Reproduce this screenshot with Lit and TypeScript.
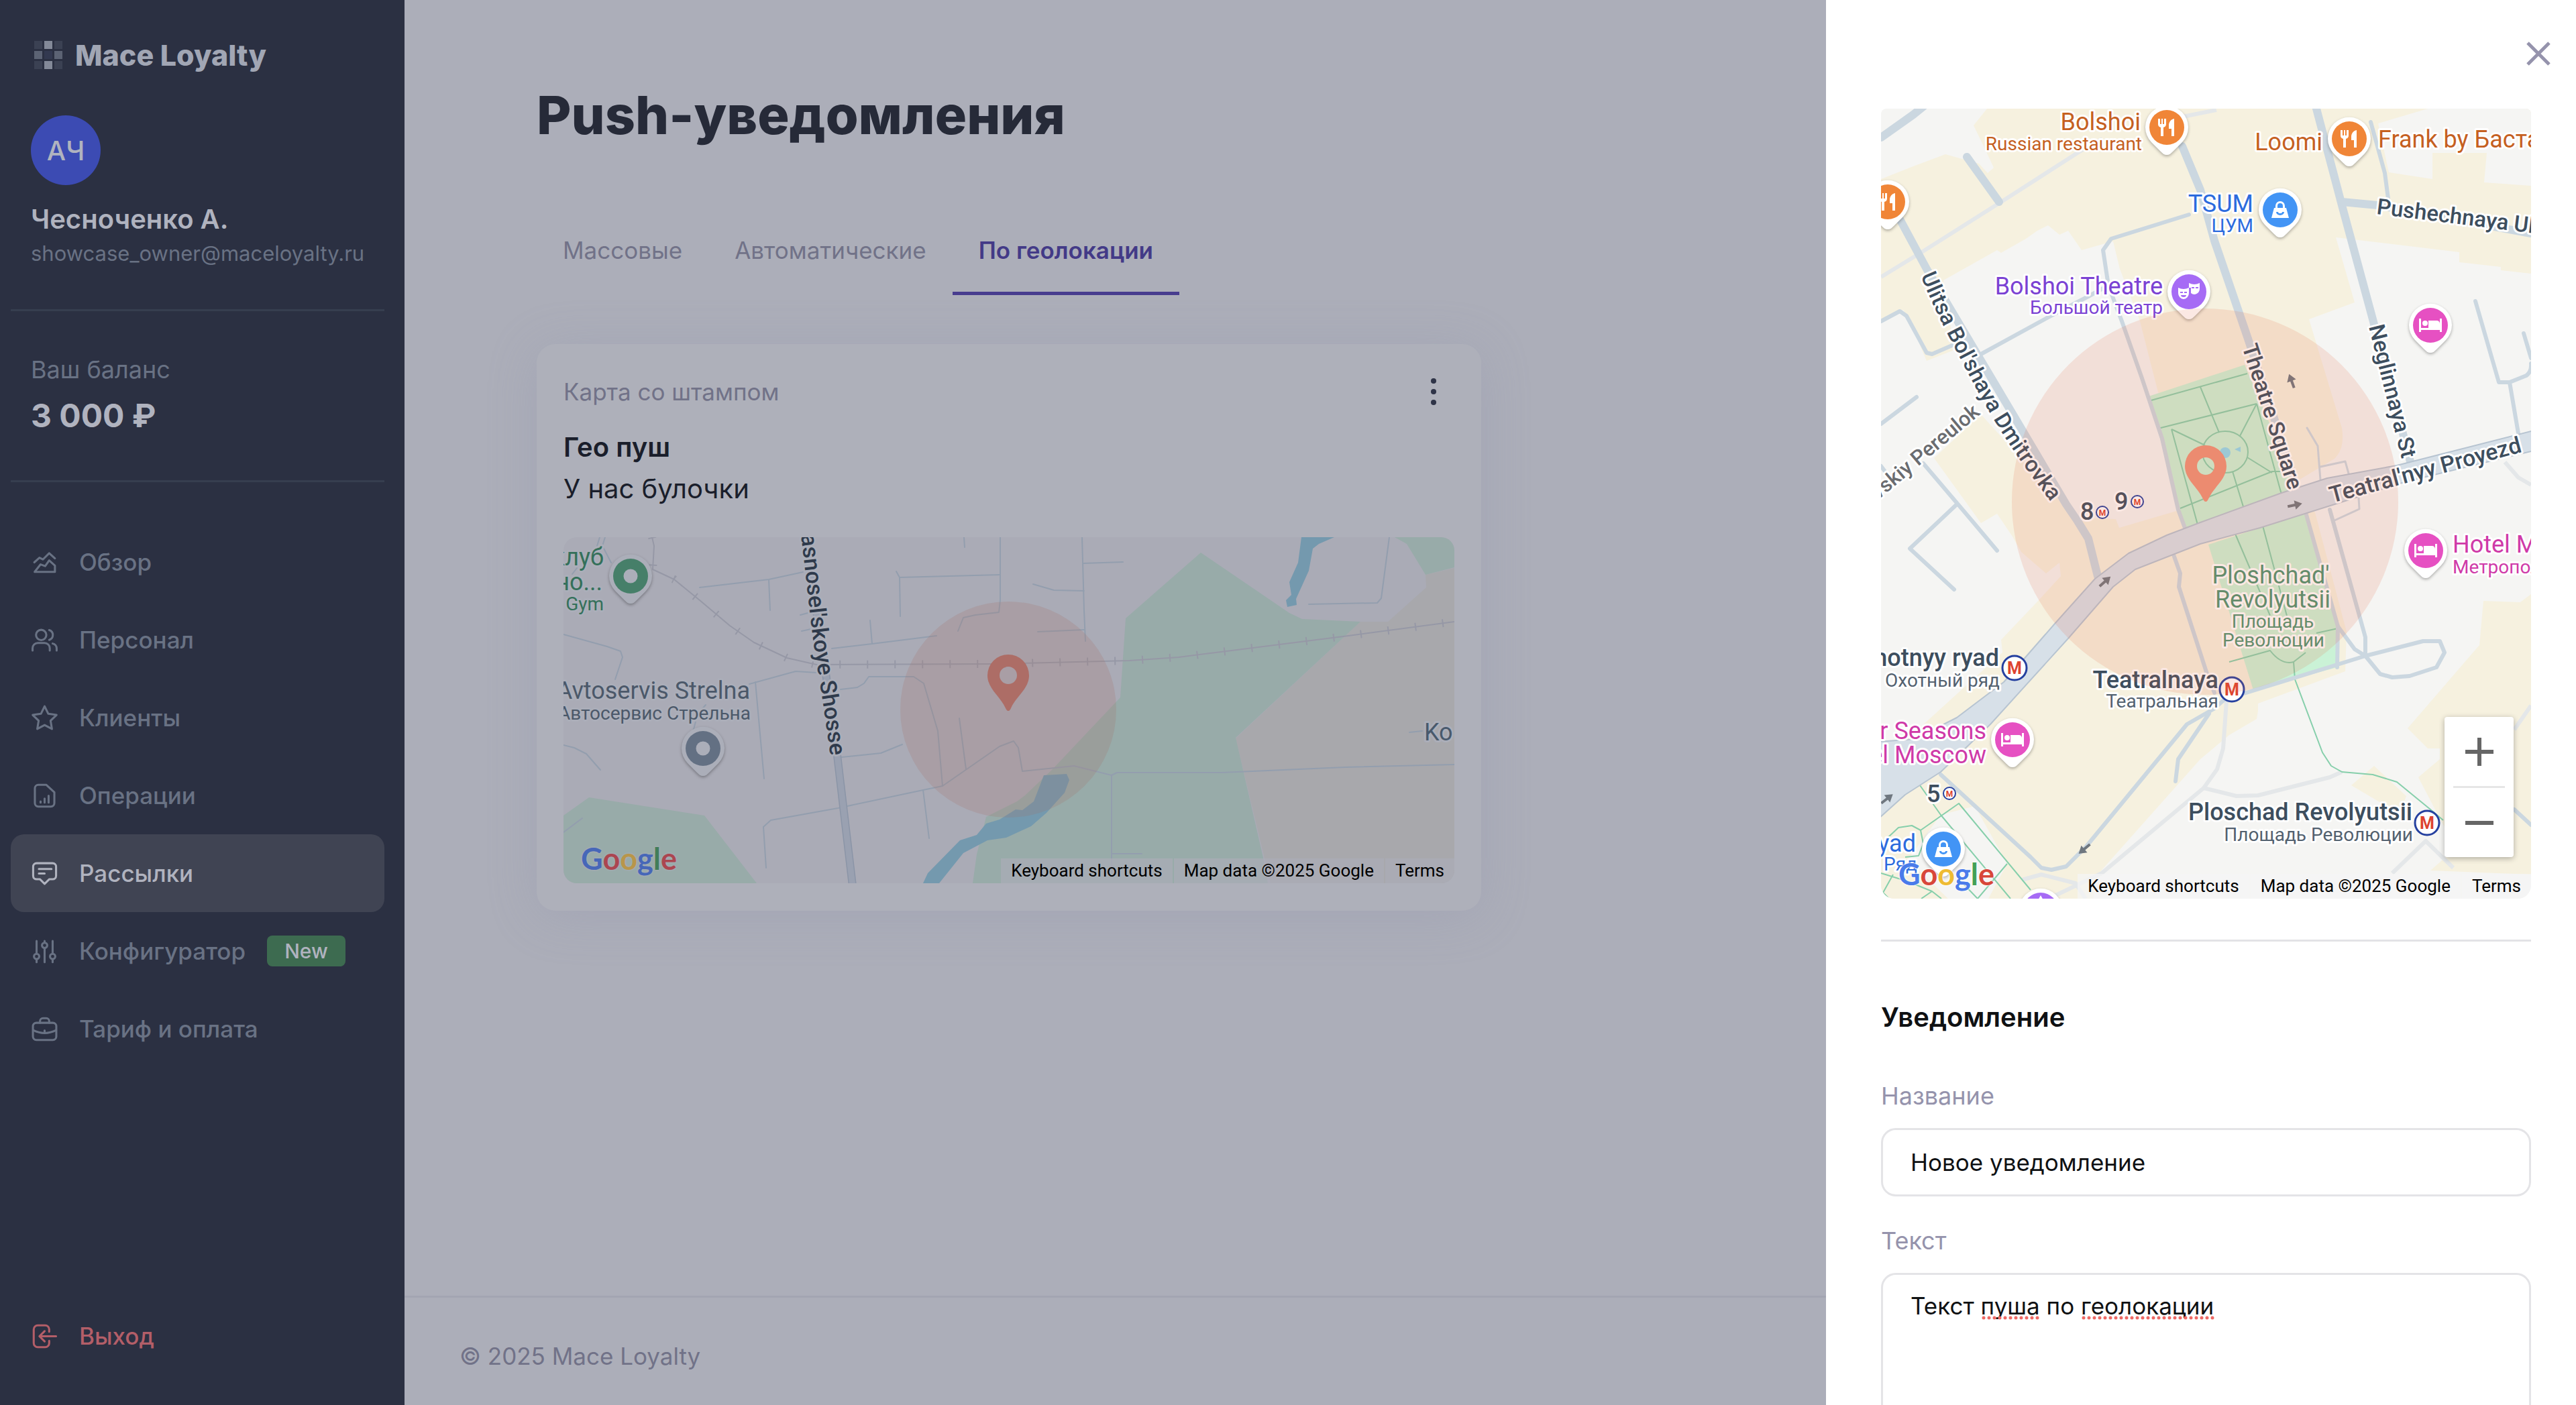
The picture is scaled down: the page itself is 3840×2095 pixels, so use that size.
import { LitElement, html, svg, css } from "lit";
import { customElement, property } from "lit/decorators.js";
import { classMap } from "lit/directives/class-map.js";

const shared = css`
  * { box-sizing: border-box; }
  button, input, textarea { font: inherit; margin: 0; }
  button { border: 0; background: none; padding: 0; cursor: pointer; color: inherit; }
  a { color: inherit; text-decoration: none; }
`;

/* ---------- Map drawing helpers ---------- */

const brandLetters = [
  ["G", "blue"], ["o", "red"], ["o", "yellow"], ["g", "blue"], ["l", "green"], ["e", "red"],
];

const glyphs: Record<string, unknown> = {
  food: svg`<path d="M-13 -13v8a5 5 0 0 0 4 5v13h4v-13a5 5 0 0 0 4 -5v-8h-3v8h-2v-8h-2v8h-2v-8zM11 -13c-5 1 -8 5 -8 10v5h4v11h4z"/>`,
  bag: svg`<path fill-rule="evenodd" d="M-9 -3h2v-3a7 7 0 0 1 14 0v3h2l4 15h-26zM-4 -3h8v-3a4 4 0 0 0 -8 0zM-6 3a6 5 0 0 0 12 0h-3a3 2 0 0 1 -6 0z"/>`,
  bed: svg`<path d="M-17 -10h3v14h11v-11h13a5 5 0 0 1 4 5v-8h3v20h-3v-3h-28v3h-3z"/><circle cx="-8" cy="-3" r="4"/>`,
  masks: svg`<path fill-rule="evenodd" d="M-16 -6q8 4 16 0v8a8 9 0 0 1 -16 0zM-13 0v2h4v-2zM-7 0v2h4v-2zM-12 5a4 3 0 0 0 8 0z"/><path fill-rule="evenodd" d="M0 -13q8 4 16 0v8a8 9 0 0 1 -13 7v-8h-3zM4 -7v2h4v-2zM10 -7v2h4v-2z"/>`,
  star: svg`<path d="M0 -22l5 9h9l-8 7 3 10 -9 -6 -9 6 3 -10 -8 -7h9z"/>`,
  dot: svg`<circle r="10.500"/>`,
};

const poi = (x: number, y: number, tone: string, glyph: string) => svg`
  <g class="poi" transform="translate(${x} ${y})">
    <path class="poi-shell" d="M0 41C-4 41 -6 39 -9 36L-23 22A32 32 0 1 1 23 22L9 36C6 39 4 41 0 41Z"/>
    <circle class="fill-${tone}" r="26"/>
    <g class="poi-glyph">${glyphs[glyph]}</g>
  </g>`;

const metro = (x: number, y: number, small = false) => svg`
  <g class="metro ${small ? "metro-small" : ""}" transform="translate(${x} ${y})">
    <circle r="${small ? 9 : 18}"/>
    <text text-anchor="middle" y="${small ? 5 : 9}">М</text>
  </g>`;

const pin = (x: number, y: number) => svg`
  <path class="pin" fill-rule="evenodd" transform="translate(${x} ${y})"
    d="M0 53C-2 53 -3 51 -4 49C-12 31 -31 20 -31 0A31 31 0 1 1 31 0C31 20 12 31 4 49C3 51 2 53 0 53ZM0 -13A13 13 0 1 0 0 13A13 13 0 1 0 0 -13Z"/>`;

const arrow = (x: number, y: number, angle: number) => svg`
  <path class="arrow" transform="translate(${x} ${y}) rotate(${angle})" d="M-11 -2h11v-5l11 7 -11 7v-5h-11z"/>`;

const paths = (cls: string, list: string[]) => list.map((d) => svg`<path class="${cls}" d="${d}"/>`);

type Label = [string, number, number, string, number?];
const labels = (list: Label[]) =>
  list.map(([text, x, y, cls, angle]) => svg`
    <text class="label ${cls}" transform="translate(${x} ${y}) rotate(${angle ?? 0})">${text}</text>`);

const suburb = svg`
  <svg class="canvas" viewBox="0 0 1328 516" preserveAspectRatio="xMidYMid slice" role="img" aria-label="Strelna">
    <path class="built" d="M1328 46L1285 56L1286 75L1229 126H1188L1002 300L1054 516H1328Z"/>
    ${paths("park", [
      "M950 23L1082 113L1101 122L1188 126L1002 299L1043 478L1050 516H610L616 473L630 417L676 394L688 385L729 346L830 239L838 121Z",
      "M1239 0L1257 10L1285 56L1328 45V0Z",
      "M0 415L38 388L210 415L288 516H0Z",
    ])}
    ${paths("water", [
      "M536 516L543 501L591 452L616 444L630 427L650 421L674 406L684 407L701 394L716 355L750 353L754 362L747 381L720 411L697 431L660 448L632 452L596 471L560 516Z",
      "M1100 0L1095 38L1082 67L1085 86L1077 94L1079 104L1093 101L1092 92L1111 50L1117 17L1126 10L1149 0Z",
    ])}
    ${paths("road thin", [
      "M203 75L306 63L357 52M306 63L308 109",
      "M0 145L65 163L85 170L88 179L77 212",
      "M0 310L16 314L34 323L55 347",
      "M277 219L346 200L377 202M286 216L299 360",
      "M496 51L501 60L650 56M501 60L502 118",
      "M651 0V94L649 112L614 116L596 120L588 140M597 0L598 15",
      "M400 166L460 159L556 147M457 124L460 159",
      "M413 227L438 224L448 218L455 208H522L537 218L558 289L565 371",
      "M415 328L473 322L505 309M590 270L600 346",
      "M302 493L298 432L309 422L409 404L536 377L565 371L650 312L671 304L678 314L684 349L761 341L817 355L825 351H981L1165 343L1328 339",
      "M536 377L545 449M817 355V500M817 472H862",
      "M773 0L776 109L778 155M775 39L834 37M700 70L731 79L776 80M707 141L776 138",
      "M1111 100L1213 98L1219 91L1231 0M1261 291L1280 289",
      "M54 0L50 13M62 0L58 13L71 38M13 55L20 46",
      "M353 116L368 112M355 140L369 137M0 440L28 419M205 258L212 250M193 290L197 275",
    ])}
    ${["rail", "rail ties"].map((cls) => svg`<path class="${cls}" d="M132 0L135 13L133 48L165 63L203 94L248 132L284 157L333 180L377 190L641 189L844 184L917 179L1004 168L1170 147L1328 126"/>`)}
    <path class="avenue-edge" d="M358 -4L385 160L408 325L431 520"/>
    <path class="avenue" d="M358 -4L385 160L408 325L431 520"/>
    <path id="shosse" class="guide" d="M354 -3C362 60 368 130 377 186C384 230 391 270 400 345"/>
    <text class="label street major"><textPath href="#shosse">asnosel'skoye Shosse</textPath></text>
    ${labels([
      ["клуб", 60, 42, "end green"], ["но...", 58, 79, "end green"], ["Gym", 60, 109, "end green small"],
      ["Avtoservis Strelna", 278, 241, "end slate"], ["Автосервис Стрельна", 279, 272, "end slate small"],
      ["Ko", 1283, 303, "navy"],
    ])}
    ${poi(100, 58, "green", "dot")}
    ${poi(208, 315, "slate", "dot")}
    <circle class="radius" cx="663" cy="257" r="161"/>
    ${pin(663, 206)}
  </svg>`;

const centre = svg`
  <svg class="canvas" viewBox="0 0 969 1178" preserveAspectRatio="xMidYMid slice" role="img" aria-label="Bolshoi Theatre">
    ${paths("built", [
      "M158 0L138 25L153 56L168 88L159 96L146 82L96 68L48 86L0 105V317L33 300L41 313L68 376L109 360L93 256L173 211L179 215L216 194L233 182L249 174L266 188L279 182L299 211L338 200L346 198L356 239L386 317L413 423L560 600L619 556L676 522Q692 506 687 476L638 314L706 289L678 192L862 214V229L924 236V241L969 246V0Z",
      "M149 456L290 610L350 612L355 625L440 600L633 590L647 602L694 780L692 839L562 887V898L560 910L519 934L476 970L323 1142L316 1178H0V960L59 922L181 811L179 792L236 732L268 697L266 677L246 693L209 661L196 638L173 604L149 618L79 521Z",
      "M898 734L953 736L969 724V1142L819 1136L860 1100L837 1066L801 997L833 970V954H815L785 924L892 800Z",
      "M735 980L783 1025L780 1033L769 1049L701 1009Z",
    ])}
    ${paths("ground", [
      "M815 0L741 22L757 95L822 105V66H903L899 110L969 115V0Z",
      "M89 1053L140 1040L188 1126L160 1178H100L40 1120Z",
    ])}
    ${paths("alley", [
      "M0 251L59 215L176 141L296 64L330 45M440 14L500 2",
      "M515 883L510 954L501 985L481 1013L329 1140L250 1178",
      "M481 1013L530 1025L562 1024L669 997L687 989M930 527L950 550L969 561",
      "M762 1140L812 1092L853 1132M969 890L944 926",
      "M210 1150L239 1142L290 1155L305 1178",
    ])}
    ${paths("park", ["M399 429L542 382L621 568L453 628Z", "M488 650L631 604L681 772L680 833L555 867Z"])}
    ${paths("path", [
      "M399 436L546 395M413 477L560 440M476 415L504 483M433 478L473 624M433 478L483 502M560 440L535 488M560 440L600 586",
      "M446 596L583 541H596M546 520L583 543M524 541L542 600",
      "M528 634L580 756M569 622L606 760M519 825L580 808Q597 830 615 825L633 811M649 782L681 775",
      "M615 825L617 851L658 960L671 980L687 989L733 993L769 1004L819 1045L838 1061",
      "M58 1009L89 1053L193 1178M223 1165L116 1036L59 1076M9 1088L26 1072L46 1069L59 1076L63 1096L56 1114L36 1116",
      "M0 1140L39 1152L76 1167L90 1178M76 1167L60 1178M18 1142L3 1169L12 1178M188 1126L144 1178L119 1152",
    ])}
    <ellipse class="path" cx="513" cy="512" rx="34" ry="31"/>
    <circle class="water" cx="513" cy="513" r="8"/>
    <path class="water" d="M527 508L536 504V512Z"/>
    ${paths("road street-line", [
      "M751 96L730 20M751 96L756 134",
      "M459 158L343 194L331 211L339 264L359 317L389 402L419 492L443 598L454 628",
      "M149 366L253 309L309 280L338 264",
      "M0 317L28 302L38 309L68 364L76 366L106 353",
      "M0 470L53 430M0 533L6 541M63 529L136 615L173 659M113 590L43 656L109 717",
      "M89 993L223 1116L239 1132L254 1135L276 1130L306 1100L456 918L496 895L512 881L722 816L808 794H833L840 811L828 833L788 846L762 848L744 843L722 816L706 806L681 772L633 602",
      "M681 772L680 833M669 598L722 788V816M436 665L446 693L444 713L486 843L497 871",
      "M489 902L443 970L439 1003M944 1045L969 1068",
      "M886 287L921 408H937L962 398Q970 392 969 380M958 335L969 372M937 408L951 490",
    ])}
    ${paths("road lane", ["M635 476L651 503L656 566M655 534L692 526L699 551M712 580L713 597L676 614"])}
    ${paths("road wide", [
      "M20 150L68 239L276 590L293 615L309 641L323 697",
      "M449 56L476 121L497 197L547 343L622 571",
      "M649 0L687 144L733 314L790 530",
      "M687 139L740 144L969 186",
      "M0 43L48 9L64 -4M128 72L176 139",
    ])}
    <path class="boulevard" d="M-4 944L50 940L113 908L183 855L259 768L319 701L369 663L426 636L476 617L597 573L665 551L769 532L973 480V510L783 556L676 590L565 625L476 649L379 687L346 713L279 790L163 918L89 989L36 1023L-4 1059Z"/>
    ${arrow(612, 406, -110)}
    ${arrow(617, 591, -12)}
    ${arrow(334, 705, -42)}
    ${arrow(9, 1029, -38)}
    ${arrow(303, 1104, 140)}
    <path id="dmitrovka" class="guide" d="M59 249C78 296 97 332 120 376C150 434 190 512 290 632"/>
    <text class="label street"><textPath href="#dmitrovka">Ulitsa Bol'shaya Dmitrovka</textPath></text>
    ${labels([
      ["vskiy Pereulok", 149, 455, "end lane-name", -40],
      ["Pushechnaya Ulitsa", 738, 157, "street", 7],
      ["Neglinnaya St", 727, 325, "street", 76],
      ["Theatre Square", 538, 355, "street", 72],
      ["Teatral'nyy Proyezd", 672, 588, "street major", -15],
      ["Bolshoi", 387, 32, "end orange"], ["Russian restaurant", 389, 62, "end orange small"],
      ["Loomi", 658, 62, "end orange"], ["Frank by Баста", 741, 58, "orange"],
      ["TSUM", 555, 154, "end blue"], ["ЦУМ", 555, 184, "end blue small"],
      ["Bolshoi Theatre", 420, 277, "end purple"], ["Большой театр", 420, 306, "end purple small"],
      ["8", 297, 613, "station"], ["9", 348, 598, "station"], ["5", 68, 1034, "station"],
      ["Ploshchad'", 581, 708, "middle park-name"], ["Revolyutsii", 584, 744, "middle park-name"],
      ["Площадь", 584, 774, "middle park-name small"], ["Революции", 585, 802, "middle park-name small"],
      ["Okhotnyy ryad", 176, 831, "end station"], ["Охотный ряд", 177, 862, "end slate small"],
      ["Teatralnaya", 503, 864, "end station"], ["Театральная", 503, 893, "end slate small"],
      ["Four Seasons", 157, 940, "end pink"], ["Hotel Moscow", 157, 976, "end pink"],
      ["Hotel Metropol", 852, 662, "pink"], ["Метрополь", 852, 693, "pink small"],
      ["Ploschad Revolyutsii", 792, 1061, "end station"], ["Площадь Революции", 793, 1092, "end slate small"],
      ["Okhotny Ryad", 52, 1108, "end blue"], ["Охотный Ряд", 54, 1136, "end blue small"],
    ])}
    ${metro(330, 602, true)} ${metro(382, 586, true)} ${metro(102, 1021, true)}
    ${metro(199, 834)} ${metro(523, 866)} ${metro(814, 1065)}
    ${poi(426, 28, "orange", "food")} ${poi(10, 139, "orange", "food")} ${poi(698, 45, "orange", "food")}
    ${poi(595, 151, "blue", "bag")} ${poi(93, 1104, "blue", "bag")}
    ${poi(459, 273, "purple", "masks")} ${poi(238, 1195, "purple", "star")}
    ${poi(819, 323, "pink", "bed")} ${poi(196, 941, "pink", "bed")} ${poi(812, 659, "pink", "bed")}
    <circle class="radius" cx="483" cy="586" r="288"/>
    ${pin(484, 533)}
  </svg>`;

@customElement("geo-map")
export class GeoMap extends LitElement {
  @property() place: "suburb" | "centre" = "suburb";
  @property({ type: Boolean, reflect: true }) dimmed = false;
  @property({ type: Boolean }) zoomable = false;

  static styles = [shared, css`
    :host {
      --ground: #f5f5f3; --built: #f6f1df; --park: #caf2d6; --water: #90daee; --path: #86cfab;
      --road: #cbd7e0; --edge: #b7c4d1; --boulevard: #d7e0e8; --alley: #e4e7e9; --halo: #fff;
      --orange: #f08537; --blue: #4294f5; --purple: #a66bf5; --pink: #e650c2; --green: #12b76a; --slate: #637083;
      --orange-ink: #c5601f; --blue-ink: #2c6bdd; --purple-ink: #7b42d3; --pink-ink: #cf3aa8; --green-ink: #34705a;
      --slate-ink: #53616f; --navy-ink: #48596c; --street-ink: #3d4e5e; --park-ink: #4f9372;
      --pin: #ec8b70; --radius: #e16240; --radius-alpha: 0.15; --attribution: #f5f5f5b3;
      display: block; position: relative; overflow: hidden; background: var(--ground);
      font-family: Roboto, "Liberation Sans", sans-serif;
    }
    :host([dimmed]) {
      --ground: #aaabb6; --built: #a8a8ac; --park: #98aba9; --water: #7499ae; --road: #939eae;
      --edge: #8b95a7; --boulevard: #9aa1b1; --halo: #abaeb9; --green: #467f69; --pin: #ad6d66;
      --slate-ink: #4b5869; --street-ink: #2f3a4b; --radius: #a66e63; --radius-alpha: 0.2; --attribution: #abadb8b3;
    }
    .canvas { display: block; width: 100%; height: 100%; }
    .canvas path, .canvas ellipse { fill: none; stroke-linejoin: round; }
    .canvas .ground { fill: var(--ground); }
    .canvas .built { fill: var(--built); }
    .canvas .park { fill: var(--park); }
    .canvas .water { fill: var(--water); }
    .road { stroke: var(--road); stroke-linecap: round; }
    .thin { stroke-width: 2; }
    .lane { stroke-width: 3; }
    .street-line { stroke-width: 6; }
    .wide { stroke-width: 12; }
    .alley { stroke: var(--alley); stroke-width: 6; }
    .path { stroke: var(--path); stroke-width: 2; }
    .rail { stroke: #9698a6; stroke-width: 2; }
    .ties { stroke-width: 12; stroke-dasharray: 2 39; }
    .avenue { stroke: var(--boulevard); stroke-width: 9; }
    .avenue-edge { stroke: var(--edge); stroke-width: 12; }
    .canvas .boulevard { fill: var(--boulevard); stroke: var(--edge); stroke-width: 2; }
    .canvas .arrow { fill: #6f777f; }
    .label {
      font-size: 36px; fill: var(--slate-ink); stroke: var(--halo); stroke-width: 6px;
      stroke-linejoin: round; paint-order: stroke;
    }
    .small { font-size: 28px; }
    .street { font-size: 33px; font-weight: 500; fill: var(--street-ink); }
    .major { font-size: 34px; }
    .lane-name { font-size: 31px; font-weight: 500; fill: #6a6c70; }
    .station { font-size: 36px; font-weight: 500; fill: var(--street-ink); }
    .end { text-anchor: end; }
    .middle { text-anchor: middle; }
    .orange { fill: var(--orange-ink); }
    .blue { fill: var(--blue-ink); }
    .purple { fill: var(--purple-ink); }
    .pink { fill: var(--pink-ink); }
    .green { fill: var(--green-ink); }
    .navy { fill: var(--navy-ink); }
    .park-name { fill: var(--park-ink); }
    .poi { filter: drop-shadow(0 2px 2px #0000004d); }
    .canvas .poi-shell { fill: var(--halo); }
    .poi-glyph, .canvas .poi-glyph path { fill: var(--halo); }
    .fill-orange { fill: var(--orange); }
    .fill-blue { fill: var(--blue); }
    .fill-purple { fill: var(--purple); }
    .fill-pink { fill: var(--pink); }
    .fill-green { fill: var(--green); }
    .fill-slate { fill: var(--slate); }
    .metro circle { fill: #fff; stroke: #25409f; stroke-width: 3; }
    .metro text { font-size: 25px; font-weight: 700; fill: #dd4330; }
    .metro-small text { font-size: 12px; }
    .metro-small circle { stroke-width: 2; }
    .radius { fill: var(--radius); fill-opacity: var(--radius-alpha); }
    .canvas .pin { fill: var(--pin); }
    .brand {
      position: absolute; left: 26px; bottom: 9px; font: 700 45px/56px Lato, sans-serif;
      text-shadow: 0 0 3px var(--halo), 0 0 3px var(--halo);
    }
    .brand .blue { color: #4a7bea; }
    .brand .red { color: #d8473a; }
    .brand .yellow { color: #eebb33; }
    .brand .green { color: #43a055; }
    :host([dimmed]) .brand .blue { color: #4767b8; }
    :host([dimmed]) .brand .red { color: #ab4650; }
    :host([dimmed]) .brand .yellow { color: #b8964a; }
    :host([dimmed]) .brand .green { color: #427d59; }
    .attribution {
      position: absolute; right: 0; bottom: 0; display: flex; gap: 2px;
      font-size: 26px; line-height: 37px; color: #000;
    }
    .attribution > * { padding: 0 15px; background: var(--attribution); }
    .zoom {
      position: absolute; right: 26px; bottom: 62px; width: 103px; padding: 0 13px;
      background: #fff; border-radius: 4px; box-shadow: 0 2px 8px #0000004d;
    }
    .zoom button { display: grid; place-items: center; width: 100%; height: 103px; }
    .zoom button + button { border-top: 3px solid #e6e6e6; height: 106px; }
    .zoom svg { width: 42px; height: 42px; fill: #666; }
  `];

  render() {
    return html`
      ${this.place === "suburb" ? suburb : centre}
      <a class="brand" href="#">${brandLetters.map(([letter, tone]) => html`<span class=${tone}>${letter}</span>`)}</a>
      <div class="attribution">
        <button type="button">Keyboard shortcuts</button><span>Map data ©2025 Google</span><a href="#">Terms</a>
      </div>
      ${this.zoomable ? html`
        <div class="zoom">
          <button type="button" aria-label="+"><svg viewBox="0 0 42 42"><path d="M18 0h6v18h18v6h-18v18h-6v-18h-18v-6h18z"/></svg></button>
          <button type="button" aria-label="−"><svg viewBox="0 0 42 42"><path d="M0 18h42v6h-42z"/></svg></button>
        </div>` : null}
    `;
  }
}

/* ---------- Side navigation ---------- */

const icons: Record<string, unknown> = {
  overview: svg`<path d="M3 12l4.500-4 3 1.500 5.500-5.500 5 4.500M3.300 20.300h17.700v-5.500l-5-4.500-3.500 5-4-1.500z"/>`,
  staff: svg`<circle cx="9" cy="7.500" r="4.500"/><path d="M1.500 21v-2a4.500 4.500 0 0 1 4.500-4.500h6a4.500 4.500 0 0 1 4.500 4.500v2M16 3.200a4.500 4.500 0 0 1 0 8.600M19 15a4.500 4.500 0 0 1 3.500 4.200v1.800"/>`,
  clients: svg`<path d="M12 1.800l3.200 6.600 7.200 1-5.200 5 1.200 7.200-6.400-3.400-6.400 3.400 1.200-7.200-5.200-5 7.200-1z"/>`,
  operations: svg`<path d="M13.500 2.500h-7a3 3 0 0 0-3 3v13a3 3 0 0 0 3 3h11a3 3 0 0 0 3-3v-9.500zM8.500 17v1M12 14.500v3.500M15.500 12v6"/>`,
  mailing: svg`<path d="M5 3h14a3 3 0 0 1 3 3v8a3 3 0 0 1-3 3h-3l-4 4-4-4h-3a3 3 0 0 1-3-3v-8a3 3 0 0 1 3-3zM7 8h11M7 12h5"/>`,
  builder: svg`<path d="M5 3v11M5 19v2.500M12 9.500v12M12 3v1M19 3v11M19 19v2.500"/><circle cx="5" cy="16.500" r="2.300"/><circle cx="12" cy="6.800" r="2.300"/><circle cx="19" cy="16.500" r="2.300"/>`,
  billing: svg`<rect x="1.800" y="6.500" width="20.400" height="15" rx="3"/><path d="M8 6.500v-1.500a2.500 2.500 0 0 1 2.500-2.500h3a2.500 2.500 0 0 1 2.500 2.500v1.500M2 13q10 5 20 0M12 13.200v1"/>`,
  exit: svg`<path d="M16 8v-2a3.500 3.500 0 0 0-3.500-3.500h-6.500a3.500 3.500 0 0 0-3.500 3.500v12a3.500 3.500 0 0 0 3.500 3.500h6.500a3.500 3.500 0 0 0 3.500-3.500v-2M22 12h-14M12 7.500l-4.500 4.500 4.500 4.500"/>`,
};

const icon = (name: string) => html`<svg class="icon" viewBox="0 0 24 24" aria-hidden="true">${icons[name]}</svg>`;

const menu = [
  { icon: "overview", text: "Обзор" },
  { icon: "staff", text: "Персонал" },
  { icon: "clients", text: "Клиенты" },
  { icon: "operations", text: "Операции" },
  { icon: "mailing", text: "Рассылки", active: true },
  { icon: "builder", text: "Конфигуратор", badge: "New" },
  { icon: "billing", text: "Тариф и оплата" },
];

const logoCells = ["faint", "bright", "faint", "mid", "dark", "mid", "faint", "bright", "faint"];

@customElement("side-nav")
export class SideNav extends LitElement {
  static styles = [shared, css`
    :host {
      display: flex; flex-direction: column; flex: none; width: 603px; padding: 52px 30px 45px 16px;
      background: #2b3042; color: #697284;
    }
    .logo { display: flex; align-items: center; gap: 19px; height: 60px; padding-left: 35px; font-size: 43px; font-weight: 800; color: #a1a6b4; }
    .cells { display: grid; grid-template-columns: repeat(3, 12px); grid-auto-rows: 12px; gap: 3px; }
    .faint { background: #3b4153; }
    .bright { background: #838998; }
    .mid { background: #5c6374; }
    .dark { background: #333950; }
    .section { padding: 0 30px; border-bottom: 3px solid #363e4f; }
    .avatar {
      display: grid; place-items: center; width: 104px; height: 104px; margin-top: 60px; border-radius: 50%;
      background: #3c4bb3; color: #b0b3bf; font-size: 40px; font-weight: 500;
    }
    .name { margin-top: 26px; font-size: 40px; font-weight: 600; line-height: 50px; color: #b0b3bf; }
    .email { margin-top: 6px; padding-bottom: 63px; font-size: 31px; line-height: 40px; }
    .caption { margin-top: 65px; font-size: 36px; line-height: 44px; }
    .amount { margin-top: 17px; padding-bottom: 66px; font-size: 48px; font-weight: 700; line-height: 60px; color: #b0b3bf; }
    nav { margin-top: 61px; }
    .item { display: flex; align-items: center; height: 116px; padding: 0 30px; border-radius: 20px; font-size: 35px; font-weight: 500; }
    .item.active { background: #404453; color: #b0b3bf; }
    .icon { width: 41px; height: 41px; margin-right: 31px; fill: none; stroke: currentColor; stroke-width: 1.8; stroke-linecap: round; stroke-linejoin: round; }
    .badge {
      margin-left: 32px; padding: 0 26px; border-radius: 8px; background: #3d6b50; color: #b0b3bf;
      font-size: 30px; font-weight: 500; line-height: 46px;
    }
    .exit { margin-top: auto; color: #b35e68; }
  `];

  render() {
    return html`
      <a class="logo" href="#"><span class="cells">${logoCells.map((c) => html`<i class=${c}></i>`)}</span>Mace Loyalty</a>
      <div class="section">
        <div class="avatar">АЧ</div>
        <div class="name">Чесноченко А.</div>
        <div class="email">showcase_owner@maceloyalty.ru</div>
      </div>
      <div class="section">
        <div class="caption">Ваш баланс</div>
        <div class="amount">3 000 ₽</div>
      </div>
      <nav>
        ${menu.map((m) => html`
          <a href="#" class=${classMap({ item: true, active: !!m.active })}>
            ${icon(m.icon)}${m.text}${m.badge ? html`<span class="badge">${m.badge}</span>` : null}
          </a>`)}
      </nav>
      <button type="button" class="item exit">${icon("exit")}Выход</button>
    `;
  }
}

/* ---------- Notification editor ---------- */

@customElement("push-drawer")
export class PushDrawer extends LitElement {
  static styles = [shared, css`
    :host { display: block; overflow: hidden; background: #fff; color: #0f1113; }
    header { display: flex; justify-content: flex-end; padding: 48px 24px 50px; }
    .close { display: grid; place-items: center; width: 64px; height: 64px; }
    .close svg { width: 36px; height: 36px; stroke: #9593ac; stroke-width: 5; }
    form { padding: 0 67px 0 82px; }
    geo-map { height: 1178px; border-radius: 8px 8px 20px 20px; }
    hr { height: 3px; margin: 61px 0 0; border: 0; background: #e3e3e6; }
    h2 { margin: 88px 0 70px; font-size: 40px; font-weight: 600; line-height: 50px; }
    label { display: block; margin-bottom: 26px; font-size: 36px; line-height: 44px; color: #9593ac; }
    .field {
      display: block; width: 100%; padding: 24px 41px; border: 3px solid #e4e4e7; border-radius: 22px; outline: 0;
      background: #fff; color: inherit; font-size: 35px; line-height: 44px; resize: none;
    }
    .text { position: relative; }
    .spelling {
      position: absolute; left: 44px; top: 63px; width: 480px; height: 8px;
      stroke: #ee6a66; stroke-width: 5; stroke-linecap: round; stroke-dasharray: 0 8;
    }
    input.field { height: 102px; margin-bottom: 44px; padding-block: 0; }
    textarea.field { height: 300px; }
  `];

  render() {
    return html`
      <header>
        <button type="button" class="close" aria-label="Закрыть">
          <svg viewBox="0 0 36 36"><path d="M2 2L34 34M34 2L2 34"/></svg>
        </button>
      </header>
      <form>
        <geo-map place="centre" zoomable></geo-map>
        <hr>
        <h2>Уведомление</h2>
        <label for="title">Название</label>
        <input class="field" id="title" .value=${"Новое уведомление"}>
        <label for="text">Текст</label>
        <div class="text">
          <textarea class="field" id="text" spellcheck="false" .value=${"Текст пуша по геолокации"}></textarea>
          <svg class="spelling" viewBox="0 0 480 8" aria-hidden="true"><path d="M109 4H194M258 4H453"/></svg>
        </div>
      </form>
    `;
  }
}

/* ---------- Page ---------- */

const tabs = [
  { text: "Массовые" },
  { text: "Автоматические" },
  { text: "По геолокации", active: true },
];

@customElement("app-root")
export class AppRoot extends LitElement {
  static styles = [shared, css`
    :host {
      display: flex; position: relative; height: 100vh; min-height: 2000px; overflow: hidden; background: #acaeb9;
      font-family: Inter, "Liberation Sans", sans-serif; font-size: 35px; color: #262a38;
    }
    .page { display: flex; flex-direction: column; flex: 1; min-width: 0; }
    main { flex: 1; padding: 121px 0 0 197px; }
    h1 { margin: 0 0 89px; font-size: 79px; font-weight: 800; line-height: 100px; }
    .tabs { display: flex; height: 130px; margin-bottom: 73px; }
    .tab { padding: 0 39px; border-bottom: 5px solid transparent; color: #717288; }
    .tab.active { border-color: #483d8f; color: #433a87; font-weight: 600; }
    .card { width: 1408px; padding: 40px 40px 41px; border-radius: 28px; background: #aeb0ba; box-shadow: 0 8px 70px #8f92ad4d; }
    .head { display: flex; justify-content: space-between; align-items: center; height: 62px; margin-bottom: 21px; color: #717288; }
    .more { display: grid; place-items: center; width: 62px; height: 62px; color: #2f3448; }
    .more svg { width: 10px; height: 42px; fill: currentColor; }
    h3, p { margin: 0; font-size: 40px; line-height: 62px; color: #1a1e2b; }
    h3 { font-weight: 600; }
    p { margin-bottom: 41px; }
    .card geo-map { height: 516px; border-radius: 20px; }
    footer { height: 163px; padding: 65px 82px 0; border-top: 3px solid #a3a5b2; line-height: 44px; color: #717288; }
    push-drawer { position: absolute; inset: 0 0 0 auto; width: min(100%, 1118px); }
  `];

  render() {
    return html`
      <side-nav></side-nav>
      <div class="page">
        <main>
          <h1>Push-уведомления</h1>
          <div class="tabs" role="tablist">
            ${tabs.map((t) => html`
              <button type="button" role="tab" aria-selected=${t.active ? "true" : "false"}
                class=${classMap({ tab: true, active: !!t.active })}>${t.text}</button>`)}
          </div>
          <article class="card">
            <div class="head">
              Карта со штампом
              <button type="button" class="more" aria-label="Меню">
                <svg viewBox="0 0 10 42"><circle cx="5" cy="5" r="4"/><circle cx="5" cy="21" r="4"/><circle cx="5" cy="37" r="4"/></svg>
              </button>
            </div>
            <h3>Гео пуш</h3>
            <p>У нас булочки</p>
            <geo-map place="suburb" dimmed></geo-map>
          </article>
        </main>
        <footer>© 2025 Mace Loyalty</footer>
      </div>
      <push-drawer></push-drawer>
    `;
  }
}
